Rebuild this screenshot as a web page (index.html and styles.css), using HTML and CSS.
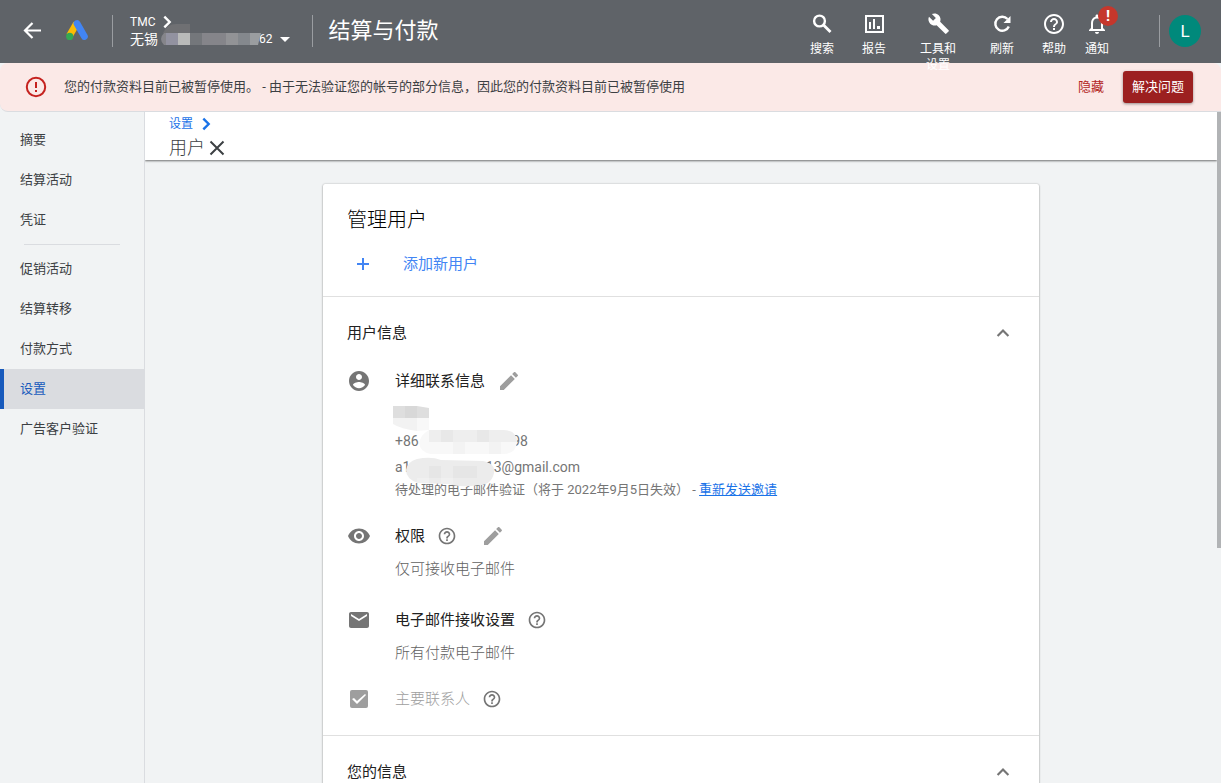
FILE: index.html
```html
<!DOCTYPE html>
<html lang="zh-CN">
<head>
<meta charset="utf-8">
<meta name="viewport" content="width=device-width, initial-scale=1">
<title>结算与付款</title>
<link rel="stylesheet" href="styles.css">
</head>
<body>
<svg class="defs" aria-hidden="true">
  <symbol id="help" viewBox="0 0 24 24"><path d="M11 18h2v-2h-2v2zm1-16C6.480 2 2 6.480 2 12s4.480 10 10 10 10-4.480 10-10S17.520 2 12 2zm0 18c-4.410 0-8-3.590-8-8s3.590-8 8-8 8 3.590 8 8-3.590 8-8 8zm0-14c-2.210 0-4 1.790-4 4h2c0-1.100.9-2 2-2s2 .9 2 2c0 2-3 1.750-3 5h2c0-2.250 3-2.500 3-5 0-2.210-1.790-4-4-4z"/></symbol>
  <symbol id="edit" viewBox="0 0 24 24"><path d="M3 17.250V21h3.750L17.810 9.940l-3.750-3.750L3 17.250zM20.710 7.040c.39-.39.39-1.020 0-1.410l-2.340-2.340c-.39-.39-1.020-.39-1.410 0l-1.830 1.830 3.750 3.750 1.830-1.830z"/></symbol>
  <symbol id="right" viewBox="0 0 24 24"><path d="M8 4l8 8-8 8" fill="none" stroke="currentColor" stroke-width="3.600"/></symbol>
  <symbol id="up" viewBox="0 0 24 24"><path d="M5.500 15.500l6.500-6.500 6.500 6.500" fill="none" stroke="currentColor" stroke-width="2.600"/></symbol>
</svg>

<header class="appbar">
  <button class="plain back" aria-label="返回"><svg class="i24" viewBox="0 0 24 24"><path d="M21 11.500H5M12.500 4L5 11.500l7.500 7.500" fill="none" stroke="currentColor" stroke-width="2.200"/></svg></button>
  <svg class="i24 logo" viewBox="0 0 24 24"><path d="M11.500 4.500L4.500 16.800" stroke="#fbbc04" stroke-width="6.800"/><path d="M12 4.500l7.400 13" stroke="#4285f4" stroke-width="6.800" stroke-linecap="round"/><circle cx="4.700" cy="17.400" r="3.600" fill="#34a853"/></svg>
  <div class="account">
    <div class="account-top">TMC <svg class="i16"><use href="#right"/></svg></div>
    <button class="plain account-name"><span>无锡</span><span class="masked"></span><span>62</span><i class="caret"></i></button>
    <svg class="account-mask" viewBox="0 0 104 22" aria-hidden="true">
      <path fill="#6f7073" d="M4 9Q8 0 17 0H31V9z"/>
      <path fill="#85858a" d="M5 9h14v12H5Q-1 15 5 9z"/>
      <path fill="#9292a0" d="M7 9h12v12H7z"/><path fill="#b9bab9" d="M19 9h12v12H19z"/>
      <path fill="#74777b" d="M31 9h12v12H31z"/><path fill="#85858a" d="M43 9h24v12H43z"/>
      <path fill="#929396" d="M67 9h12v12H67z"/><path fill="#84888d" d="M79 9h12v12H79z"/>
      <path fill="#9a9da0" d="M91 9h11l-3 12h-8z"/>
    </svg>
  </div>
  <h1>结算与付款</h1>
  <nav class="tools">
    <button class="plain tool"><svg class="i24" viewBox="0 0 24 24"><circle cx="9.500" cy="9" r="5.400" fill="none" stroke="currentColor" stroke-width="2.400"/><path d="M13.500 13l7 7" stroke="currentColor" stroke-width="2.800"/></svg>搜索</button>
    <button class="plain tool"><svg class="i24" viewBox="0 0 24 24"><path d="M4 4h17v16H4z" fill="none" stroke="currentColor" stroke-width="2"/><path d="M7 10h2v7H7zM11 7h2v10h-2zM15 14h3v3h-3z"/></svg>报告</button>
    <button class="plain tool wide"><svg class="i24" viewBox="0 0 24 24"><path d="M22.700 19l-9.100-9.100c.9-2.300.4-5-1.500-6.900-2-2-5-2.400-7.400-1.300L9 6 6 9 1.600 4.700C.4 7.100.9 10.100 2.900 12.100c1.900 1.900 4.600 2.400 6.900 1.500l9.100 9.100c.4.4 1 .4 1.400 0l2.300-2.300c.5-.4.5-1.100.1-1.400z" transform="translate(1.500 .5) scale(.93)"/></svg>工具和<br>设置</button>
    <button class="plain tool"><svg class="i24" viewBox="0 0 24 24"><path d="M17.500 7A7 7 0 1 0 18.800 14.500" fill="none" stroke="currentColor" stroke-width="2.400"/><path d="M20.500 4v7h-7z"/></svg>刷新</button>
    <button class="plain tool"><svg class="i24"><use href="#help"/></svg>帮助</button>
    <button class="plain tool bell"><svg class="i24" viewBox="0 0 24 24"><path d="M12 22c1.100 0 2-.9 2-2h-4c0 1.100.9 2 2 2zm6-6v-5c0-3.070-1.630-5.640-4.500-6.320V4c0-.83-.67-1.500-1.500-1.500s-1.500.67-1.500 1.500v.68C7.640 5.360 6 7.920 6 11v5l-2 2v1h16v-1l-2-2zm-2 1H8v-6c0-2.480 1.510-4.500 4-4.500s4 2.020 4 4.500v6z"/></svg>通知<span class="badge">!</span></button>
  </nav>
  <button class="plain avatar">L</button>
</header>

<div class="alert" role="alert">
  <svg class="i24 alert-icon" viewBox="0 0 24 24"><circle cx="12" cy="12" r="9.200" fill="none" stroke="currentColor" stroke-width="2"/><path d="M11 7h2v6h-2zM11 15h2v2h-2z"/></svg>
  <p>您的付款资料目前已被暂停使用。 - 由于无法验证您的帐号的部分信息，因此您的付款资料目前已被暂停使用</p>
  <button class="plain hide">隐藏</button>
  <button class="plain fix">解决问题</button>
</div>

<div class="body">
  <nav class="side">
    <a href="#">摘要</a>
    <a href="#">结算活动</a>
    <a href="#">凭证</a>
    <hr>
    <a href="#">促销活动</a>
    <a href="#">结算转移</a>
    <a href="#">付款方式</a>
    <a href="#" class="active" aria-current="page">设置</a>
    <a href="#">广告客户验证</a>
  </nav>
  <main>
    <div class="crumbs">
      <a href="#">设置 <svg class="i16"><use href="#right"/></svg></a>
      <div class="crumb-title"><h2>用户</h2><button class="plain" aria-label="关闭"><svg class="i24" viewBox="0 0 24 24"><path d="M5.500 5.500l13 13M18.500 5.500l-13 13" stroke="currentColor" stroke-width="2"/></svg></button></div>
    </div>
    <div class="card">
      <section class="card-head">
        <h3>管理用户</h3>
        <button class="plain add"><svg class="i16" viewBox="0 0 16 16"><path d="M8 2v12M2 8h12" stroke="currentColor" stroke-width="2"/></svg>添加新用户</button>
      </section>
      <section class="group">
        <button class="plain group-title">用户信息<svg class="i20"><use href="#up"/></svg></button>
        <div class="item">
          <svg class="i24" viewBox="0 0 24 24"><path d="M12 2C6.480 2 2 6.480 2 12s4.480 10 10 10 10-4.480 10-10S17.520 2 12 2zm0 3c1.660 0 3 1.340 3 3s-1.340 3-3 3-3-1.340-3-3 1.340-3 3-3zm0 14.200c-2.500 0-4.710-1.280-6-3.220.03-1.990 4-3.080 6-3.080 1.990 0 5.970 1.090 6 3.080-1.290 1.940-3.500 3.220-6 3.220z"/></svg>
          <div>
            <h4>详细联系信息<button class="plain edit" aria-label="修改联系信息"><svg class="i24"><use href="#edit"/></svg></button></h4>
            <div class="contact">
              <p class="phone"><span>+86</span><span>98</span></p>
              <p class="mail"><span>a1</span><span>13@gmail.com</span></p>
              <p class="pending">待处理的电子邮件验证（将于 2022年9月5日失效） - <a href="#">重新发送邀请</a></p>
              <svg class="contact-mask" viewBox="0 0 130 84" aria-hidden="true">
                <path fill="#dedede" d="M0 1h24l12 2v10H0z"/><path fill="#d8d8d8" d="M12 1h12v12H12z"/>
                <path fill="#f2f2f2" d="M0 13h24v13Q8 24 0 19z"/><path fill="#f8f8f8" d="M24 13h12v12l-12 1z"/>
                <path fill="#f8f8f8" d="M36 25h75q13 1 13 12-1 12-14 12H38q-14-3-11-14 2-6 9-10z"/>
                <path fill="#eee" d="M36 25h75q13 1 13 12H36z"/><path fill="#e8e8e8" d="M48 25h12v12H48zM84 25h12v12H84z"/>
                <path fill="#f3f3f3" d="M60 37h12v12H60zM96 37h12v12H96z"/>
                <path fill="#ececec" d="M24 54q14-3 24 1l42 1q13 3 11 12-3 13-16 12-16 3-30-1l-30-1q-12-4-12-13 1-8 11-11z"/>
                <path fill="#e6e6e6" d="M36 61h12v12H36zM60 61h24v12H60z"/><path fill="#f0f0f0" d="M24 73h12v5H24zM48 73h12v6H48z"/>
              </svg>
            </div>
          </div>
        </div>
        <div class="item">
          <svg class="i24" viewBox="0 0 24 24"><path d="M12 4.500C7 4.500 2.730 7.610 1 12c1.730 4.390 6 7.500 11 7.500s9.270-3.110 11-7.500c-1.730-4.390-6-7.500-11-7.500zM12 17c-2.760 0-5-2.240-5-5s2.240-5 5-5 5 2.240 5 5-2.240 5-5 5zm0-8c-1.660 0-3 1.340-3 3s1.340 3 3 3 3-1.340 3-3-1.340-3-3-3z"/></svg>
          <div>
            <h4>权限<svg class="i20 hint"><use href="#help"/></svg><button class="plain edit far" aria-label="修改权限"><svg class="i24"><use href="#edit"/></svg></button></h4>
            <p class="value">仅可接收电子邮件</p>
          </div>
        </div>
        <div class="item">
          <svg class="i24" viewBox="0 0 24 24"><path d="M20 4H4c-1.100 0-1.990.9-1.990 2L2 18c0 1.100.9 2 2 2h16c1.100 0 2-.9 2-2V6c0-1.100-.9-2-2-2zm0 4l-8 5-8-5V6l8 5 8-5v2z"/></svg>
          <div>
            <h4>电子邮件接收设置<svg class="i20 hint"><use href="#help"/></svg></h4>
            <p class="value">所有付款电子邮件</p>
          </div>
        </div>
        <div class="item">
          <input type="checkbox" id="primary" checked disabled>
          <div class="primary"><label for="primary">主要联系人</label><svg class="i20 hint"><use href="#help"/></svg></div>
        </div>
      </section>
      <section class="group">
        <button class="plain group-title">您的信息<svg class="i20"><use href="#up"/></svg></button>
      </section>
    </div>
  </main>
  <div class="scroll"><div class="thumb"></div></div>
</div>
</body>
</html>
```
FILE: styles.css
```css
* { box-sizing: border-box; }
body {
  margin: 0;
  height: 100vh;
  display: flex;
  flex-direction: column;
  overflow: hidden;
  background: #f1f3f4;
  color: #3c4043;
  font: 13px/20px Roboto, "Noto Sans CJK SC", sans-serif;
}
h1, h2, h3, h4, p { margin: 0; font-weight: 400; }
a { color: #1a73e8; text-decoration: none; }
svg { fill: currentColor; flex: none; display: block; }
.defs { position: absolute; width: 0; height: 0; }
.plain { border: 0; padding: 0; background: none; color: inherit; font: inherit; cursor: pointer; }
.i16 { width: 16px; height: 16px; }
.i20 { width: 20px; height: 20px; }
.i24 { width: 24px; height: 24px; }

.appbar {
  position: relative;
  z-index: 1;
  flex: none;
  height: 63px;
  display: flex;
  align-items: center;
  padding: 0 20px 1px;
  background: #5f6368;
  color: #fff;
}
.logo { margin: 0 23px 0 21px; }
.account {
  position: relative;
  height: 32px;
  border: solid #9a9da1;
  border-width: 0 1px;
  padding: 0 22px 0 17px;
  display: flex;
  flex-direction: column;
  justify-content: center;
}
.account-top { display: flex; align-items: center; gap: 4px; font-size: 12px; line-height: 16px; }
.account-name { display: flex; align-items: center; font-size: 14px; line-height: 18px; }
.account-name span:nth-child(3) { font-size: 12px; }
.masked { width: 101px; }
.caret { margin-left: 7px; border: 5px solid transparent; border-top-color: #fff; border-bottom: 0; }
.account-mask { position: absolute; left: 46px; top: 9px; width: 104px; height: 22px; }
.appbar h1 { margin-left: 16px; font-size: 22px; line-height: 32px; white-space: nowrap; }
.tools { margin-left: auto; align-self: flex-start; display: flex; padding-top: 12px; }
.tool { position: relative; width: 52px; height: 44px; display: flex; flex-direction: column; align-items: center; gap: 5px; font-size: 12px; line-height: 16px; }
.wide { width: 76px; display: block; }
.wide svg { margin: 0 auto 5px; }
.bell { width: 34px; }
.badge { position: absolute; left: 18px; top: -6px; width: 20px; height: 20px; border-radius: 50%; background: #c5372c; font-size: 15px; line-height: 20px; font-weight: 700; }
.avatar { position: relative; margin-left: 55px; width: 32px; height: 32px; border-radius: 50%; background: #00897b; font-size: 17px; }
.avatar::before { content: ""; position: absolute; left: -10px; top: 0; height: 32px; border-left: 1px solid #9a9da1; }

.alert {
  flex: none;
  display: flex;
  align-items: center;
  height: 49px;
  padding: 0 28px 0 24px;
  border-bottom: 1px solid #dadce0;
  border-radius: 8px 8px 0 8px;
  background: #fbe9e7;
}
.alert-icon { color: #c5221f; }
.alert p { flex: 1; margin-left: 16px; }
.hide { color: #b3261e; margin-right: 19px; }
.fix { height: 32px; padding: 0 9px; border-radius: 3px; background: #9c2020; color: #fff; box-shadow: 0 1px 3px rgba(0, 0, 0, .4); }

.body { flex: 1; min-height: 0; display: flex; }
.side { flex: none; width: 145px; border-right: 1px solid #dadce0; padding-top: 8px; }
.side a { display: block; padding: 10px 20px; color: #3c4043; }
.side .active { padding-left: 16px; border-left: 4px solid #185abc; background: #dadce0; color: #185abc; }
.side hr { margin: 4px 24px; border: 0; border-top: 1px solid #dadce0; }
main { flex: 1; min-width: 0; overflow: hidden; }
.crumbs { height: 48px; padding: 2px 24px; background: #fff; box-shadow: 0 1px 2px rgba(0, 0, 0, .55); font-size: 12px; }
.crumbs > a { display: flex; align-items: center; gap: 5px; }
.crumb-title { display: flex; align-items: center; }
.crumb-title h2 { font-size: 18px; line-height: 28px; font-weight: 300; }
.scroll { flex: none; width: 4px; }
.thumb { height: 65%; background: #b1b3b5; }

.card { max-width: 716px; margin: 24px auto 0; border-radius: 2px; background: #fff; box-shadow: 0 0 2px rgba(0, 0, 0, .25), 0 1px 2px rgba(0, 0, 0, .3); color: #212121; font-size: 15px; }
.card section { border-bottom: 1px solid #e0e0e0; }
.card-head { padding: 20px 24px; }
.card h3 { font-size: 20px; line-height: 32px; font-weight: 300; color: #000; }
.add { display: flex; align-items: center; gap: 32px; margin-top: 16px; padding-left: 8px; line-height: 24px; color: #4285f4; }
.group { padding: 0 24px 24px; }
.group-title { display: flex; align-items: center; justify-content: space-between; width: 100%; height: 72px; padding-right: 2px; }
.group-title svg { color: #757575; }
.item { display: flex; gap: 24px; margin-bottom: 24px; }
.item:last-child { margin-bottom: 0; }
.item:nth-child(3) { margin-bottom: 27px; }
.item:nth-child(4) { margin-bottom: 22px; }
.item > svg { color: #757575; }
.item h4 { display: flex; align-items: center; font-size: 15px; line-height: 24px; }
.edit { margin-left: 12px; color: #9e9e9e; }
.far { margin-left: 24px; }
.hint { margin-left: 12px; color: #757575; }
.value { margin-top: 9px; line-height: 24px; font-weight: 300; color: #616161; }
.contact { position: relative; padding-top: 35px; color: #757575; }
.contact p { line-height: 26px; font-size: 14px; }
.phone, .mail { display: flex; justify-content: space-between; }
.phone { width: 133px; }
.mail { width: 185px; }
.contact .pending { font-size: 13px; line-height: 20px; }
.pending a { text-decoration: underline; }
.contact-mask { position: absolute; left: -2px; top: 12px; width: 130px; height: 84px; }
.primary { display: flex; align-items: center; line-height: 24px; color: #9e9e9e; font-weight: 300; }
input[type="checkbox"] { appearance: none; flex: none; width: 18px; height: 18px; margin: 3px; border-radius: 2px; background: #9e9e9e; }
input[type="checkbox"]::before { content: ""; display: block; width: 18px; height: 18px; background: #fff; clip-path: polygon(2px 9px, 4px 8px, 7px 11px, 15px 4px, 16px 5px, 7px 14px); }
```
